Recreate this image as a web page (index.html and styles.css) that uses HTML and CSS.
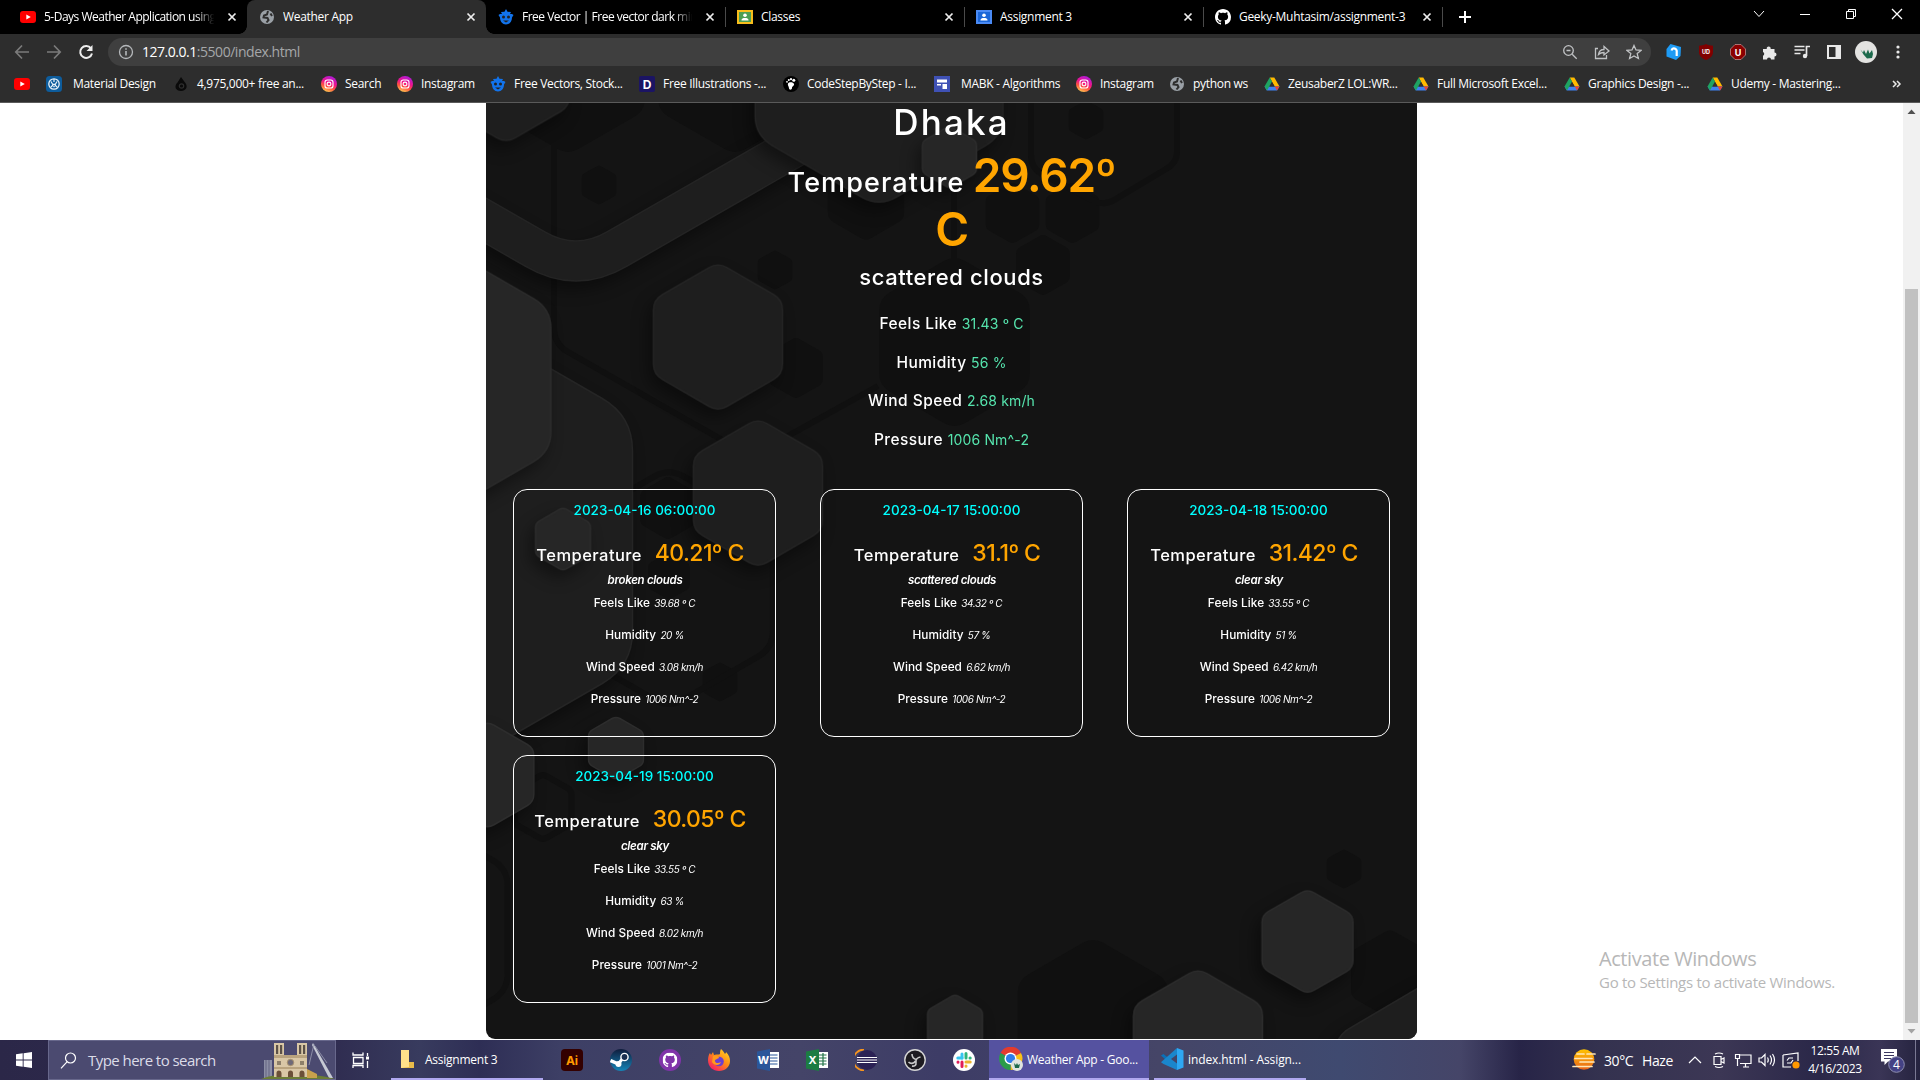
FILE: index.html
```html
<!DOCTYPE html>
<html lang="en">
<head>
<meta charset="utf-8">
<title>Weather App</title>
<link rel="stylesheet" href="styles.css">
</head>
<body>
<svg class="sprite" width="0" height="0" aria-hidden="true">
  <symbol id="yt" viewBox="0 0 16 16"><rect y="2" width="16" height="12" rx="3" fill="#f00"/><path d="M6.3 5.4v5.2L10.8 8z" fill="#fff"/></symbol>
  <symbol id="globe" viewBox="0 0 16 16"><circle cx="8" cy="8" r="7" fill="#9aa0a6"/><path d="M9 2 8 5.500 5 6.500 4.500 8.500 8.500 9 9.500 11 7.500 13.500M11.500 4.500 13 7" fill="none" stroke="#2e2e2e" stroke-width="2"/></symbol>
  <symbol id="freepik" viewBox="0 0 16 16"><path d="M8 0 9.500 2.800 13 3 12 5H14l1.500 1L14 8.500C14 12.500 11.500 15.500 8 15.500S2 12.500 2 8.500L.5 6 2 5H4L3 3 6.500 2.800z" fill="#1273eb"/><circle cx="5.500" cy="8" r="1.500" fill="#222"/><circle cx="10.500" cy="8" r="1.500" fill="#222"/><path d="M5 11.500h6L8 13.500z" fill="#222"/></symbol>
  <symbol id="person" viewBox="0 0 16 16"><circle cx="8" cy="6.200" r="1.800" fill="#fff"/><path d="M4.500 11.500V11C4.500 9.500 6 8.900 8 8.900s3.500.6 3.500 2.100v.500z" fill="#fff"/></symbol>
  <symbol id="github" viewBox="0 0 16 16"><path fill="currentColor" d="M8 0C3.580 0 0 3.580 0 8c0 3.540 2.290 6.530 5.470 7.590.4.070.550-.170.550-.380 0-.190-.010-.820-.010-1.490-2.010.370-2.530-.490-2.690-.940-.090-.230-.480-.940-.820-1.130-.280-.150-.680-.520-.010-.530.630-.010 1.080.580 1.230.820.720 1.210 1.870.870 2.330.660.070-.520.280-.870.510-1.070-1.780-.2-3.640-.890-3.640-3.950 0-.870.310-1.590.820-2.150-.080-.2-.360-1.020.080-2.120 0 0 .670-.210 2.200.820.640-.180 1.320-.270 2-.270s1.360.090 2 .270c1.530-1.040 2.200-.820 2.200-.820.440 1.100.160 1.920.080 2.120.510.560.820 1.270.820 2.150 0 3.070-1.870 3.750-3.650 3.950.290.250.540.730.540 1.480 0 1.070-.010 1.930-.010 2.200 0 .210.150.460.550.380A8.010 8.010 0 0 0 16 8c0-4.420-3.580-8-8-8z"/></symbol>
  <symbol id="close" viewBox="0 0 16 16"><path d="m4.500 4.500 7 7m0-7-7 7" stroke="#eee" stroke-width="1.700"/></symbol>
  <linearGradient id="igg" x1="0.200" y1="1" x2="0.600" y2="0"><stop offset="0" stop-color="#fd5"/><stop offset=".35" stop-color="#ff543e"/><stop offset=".6" stop-color="#f0148c"/><stop offset="1" stop-color="#b01ad8"/></linearGradient>
  <symbol id="ig" viewBox="0 0 16 16"><circle cx="8" cy="8" r="8" fill="url(#igg)"/><rect x="4" y="4" width="8" height="8" rx="2.300" fill="none" stroke="#fff" stroke-width="1.100"/><circle cx="8" cy="8" r="1.900" fill="none" stroke="#fff" stroke-width="1.100"/></symbol>
  <symbol id="drive" viewBox="0 0 16 16"><path d="M5.700 1.500h4.600l5.200 9h-4.800z" fill="#ffba00"/><path d="M3 10.500h12.500L13 14.500H2.800L.5 10.500z" fill="#3e82f1"/><path d="M10.700 10.500h4.800L13 14.500z" fill="#ea4335"/><path d="M8 6 10.600 10.500H5.400z" fill="#2e2e2e"/><path d="M5.700 1.500 8 5.500 3 14.500.5 10.500z" fill="#1ea362"/></symbol>
  <path id="hex" d="M-12.100-93Q0-100 12.100-93L74.500-57Q86.600-50 86.600-36V36Q86.600 50 74.500 57L12.100 93Q0 100-12.100 93L-74.500 57Q-86.600 50-86.600 36V-36Q-86.600-50-74.500-57Z" vector-effect="non-scaling-stroke"/>
</svg>

<header class="browser">
  <div class="tabstrip">
    <div class="tab"><svg class="i16"><use href="#yt"/></svg><span class="title fade">5-Days Weather Application using</span><svg class="i16"><use href="#close"/></svg></div>
    <div class="tab active"><svg class="i16"><use href="#globe"/></svg><span class="title">Weather App</span><svg class="i16"><use href="#close"/></svg></div>
    <div class="tab sep"><svg class="i16"><use href="#freepik"/></svg><span class="title fade">Free Vector | Free vector dark mini</span><svg class="i16"><use href="#close"/></svg></div>
    <div class="tab sep"><svg class="i16"><rect y="1" width="16" height="14" fill="#f8bd1c"/><rect x="2" y="3" width="12" height="10" fill="#4c9e52"/><use href="#person"/></svg><span class="title">Classes</span><svg class="i16"><use href="#close"/></svg></div>
    <div class="tab sep"><svg class="i16"><rect y="1" width="16" height="14" fill="#4a8af4"/><rect x="2" y="3" width="12" height="10" fill="#1a66d8"/><use href="#person"/></svg><span class="title">Assignment 3</span><svg class="i16"><use href="#close"/></svg></div>
    <div class="tab sep"><svg class="i16 white"><use href="#github"/></svg><span class="title">Geeky-Muhtasim/assignment-3</span><svg class="i16"><use href="#close"/></svg></div>
    <svg class="plus" width="46" height="34" viewBox="0 0 46 34"><path d="M23 11v12M17 17h12" stroke="#fff" stroke-width="2"/></svg>
    <div class="winctl">
      <svg viewBox="0 0 46 28"><path d="m18 11 5 5.500 5-5.500" /></svg>
      <svg viewBox="0 0 46 28"><path d="M18 14.500h10"/></svg>
      <svg viewBox="0 0 46 28"><path d="M18.500 11.500h7v7h-7zM20.500 11.500v-2h7v7h-2"/></svg>
      <svg viewBox="0 0 46 28"><path d="m18 9 10 10m0-10L18 19" stroke-width="1.300"/></svg>
    </div>
  </div>

  <div class="toolbar">
    <div class="nav">
      <svg class="i16" stroke="#7b7b7b" stroke-width="1.700" fill="none"><path d="M15 8H2m6-6.500L1.800 8 8 14.500"/></svg>
      <svg class="i16" stroke="#7b7b7b" stroke-width="1.700" fill="none"><path d="M1 8h13M8 1.500 14.200 8 8 14.500"/></svg>
      <svg class="i16" stroke="#eee" stroke-width="2" fill="none"><path d="M13 4.300A6 6 0 1 0 14 9.500"/><path d="M14.500 1v6h-6z" fill="#eee" stroke="none"/></svg>
    </div>
    <div class="omnibox">
      <svg class="i16" stroke="#b5b8bb" stroke-width="1.300" fill="none"><circle cx="8" cy="8" r="6.500"/><path d="M8 7v4.500M8 4.300v1.500" stroke-width="1.600"/></svg>
      <span class="url"><b>127.0.0.1</b>:5500/index.html</span>
      <div class="omni-icons" >
        <svg class="i16"><circle cx="6.500" cy="6.500" r="4.800"/><path d="m10.200 10.200 4.500 4.500M4.500 6.500h4"/></svg>
        <svg class="i16"><path d="M4 4.500H1.500v10h11V11M4.500 10.500C5 7 7.500 5.500 10 5.500V2.500L15 7l-5 4V8.500C7.500 8.500 6 9 4.500 10.500z"/></svg>
        <svg class="i16"><path d="m8 1.500 2 4.500 5 .4-3.800 3.200 1.200 4.900L8 11.900l-4.400 2.600 1.200-4.900L1 6.400l5-.4z"/></svg>
      </div>
    </div>
    <div class="extensions">
      <svg class="i16"><path d="M4.500 0 15 3l-.5 9L10 16 .5 12.500V5z" fill="#1e9bf5"/><path d="M5.500 6.500A2.700 2.700 0 0 1 10.700 8v4" fill="none" stroke="#fff" stroke-width="2.200"/></svg>
      <svg class="i16"><path d="M8 0C10 1.200 12.500 1.700 15 1.700V8c0 4-3 6.500-7 8-4-1.500-7-4-7-8V1.700C3.500 1.700 6 1.200 8 0z" fill="#800000"/><text x="8" y="10" class="ico-text ud">UD</text></svg>
      <svg class="i16"><path d="M5 .5h6L15.500 5v6L11 15.500H5L.5 11V5z" fill="#8b0000" stroke="#c99" stroke-width=".7"/><text x="8" y="11.500" class="ico-text">U</text></svg>
      <svg class="i16"><path d="M1 5h3.800a2 2 0 1 1 3.800 0H12.500v3.500a2 2 0 1 1 0 4V15.500H9a2 2 0 0 0-4 0H1v-3.800a2 2 0 0 0 0-3.700z" fill="#e8e8e8"/></svg>
      <svg class="i16"><path d="M.5 2.500h10M.5 6h10M.5 9.500h6" stroke="#e8e8e8" stroke-width="1.700"/><path d="M12.500 12V2.500H16" fill="none" stroke="#e8e8e8" stroke-width="1.700"/><circle cx="11" cy="12" r="2.200" fill="#e8e8e8"/></svg>
      <svg class="i16"><path d="M2 2h12v12H2z" fill="none" stroke="#e8e8e8" stroke-width="2"/><path d="M9.500 2H14v12H9.500z" fill="#e8e8e8"/></svg>
      <svg class="avatar" viewBox="0 0 22 22"><circle cx="11" cy="11" r="11" fill="#e3e3e1"/><path d="M5.500 8.500 8 11.500 9 9l2 4 2-4.500 1.500 4L17 9l1 4-1 4-5 .5-3.500-4z" fill="#1c6a4c"/></svg>
      <svg class="i16"><g fill="#e8e8e8"><circle cx="8" cy="3" r="1.600"/><circle cx="8" cy="8" r="1.600"/><circle cx="8" cy="13" r="1.600"/></g></svg>
    </div>
  </div>

  <nav class="bookmarks">
    <a><svg class="i16"><use href="#yt"/></svg></a>
    <a><svg class="i16"><rect width="16" height="16" rx="3.500" fill="#0d5c9c"/><circle cx="8" cy="8" r="5.200" fill="none" stroke="#e8f1f8" stroke-width="1.300"/><path d="m5 5.500 3 5 3-5M8 3v3M5 11l3-3 3 3" fill="none" stroke="#e8f1f8" stroke-width="1.200"/></svg><span class="wide">Material Design</span></a>
    <a><svg class="i16"><path d="M8 1 12 6.500C15 10 14 14.500 8 15 2 14.500 1 10 4.500 6.500z" fill="#0a0a0a"/><circle cx="8.500" cy="10" r="2.200" fill="none" stroke="#2e2e2e" stroke-width="1.200"/></svg><span>4,975,000+ free an...</span></a>
    <a><svg class="i16"><use href="#ig"/></svg><span>Search</span></a>
    <a><svg class="i16"><use href="#ig"/></svg><span>Instagram</span></a>
    <a><svg class="i16"><use href="#freepik"/></svg><span>Free Vectors, Stock...</span></a>
    <a><svg class="i16"><rect width="16" height="16" rx="2" fill="#1b1464"/><text x="8" y="12.500" class="ico-text d">D</text></svg><span>Free Illustrations -...</span></a>
    <a><svg class="i16"><circle cx="8" cy="8" r="8" fill="#000"/><path d="M5 7.500C6 5.500 10.500 6 11 8s-2 2-2 4-2.800 2.500-3 .3S4.300 9 5 7.500z" fill="#fff"/><g fill="#fff"><circle cx="4" cy="5.800" r=".9"/><circle cx="5.800" cy="4" r="1"/><circle cx="8" cy="3.200" r="1.100"/><circle cx="10.800" cy="4.300" r="1.500"/></g></svg><span>CodeStepByStep - I...</span></a>
    <a><svg class="i16"><rect width="16" height="16" fill="#3f51b5"/><path d="M3 3.500h10v3H3zM3 8h4v1.500H3zM8.500 8H13v5H8.500z" fill="#fff"/></svg><span class="wide">MABK - Algorithms</span></a>
    <a><svg class="i16"><use href="#ig"/></svg><span>Instagram</span></a>
    <a><svg class="i16"><use href="#globe"/></svg><span>python ws</span></a>
    <a><svg class="i16"><use href="#drive"/></svg><span>ZeusaberZ LOL:WR...</span></a>
    <a><svg class="i16"><use href="#drive"/></svg><span>Full Microsoft Excel...</span></a>
    <a><svg class="i16"><use href="#drive"/></svg><span>Graphics Design -...</span></a>
    <a><svg class="i16"><use href="#drive"/></svg><span>Udemy - Mastering...</span></a>
    <svg class="i16 more"><path d="m4 5 3 3-3 3m4-6 3 3-3 3" fill="none" stroke="#e8e8e8" stroke-width="1.500"/></svg>
  </nav>
</header>

<div class="viewport">
  <main class="weather">
    <svg class="pattern" viewBox="486 103 931 936" preserveAspectRatio="none">
      <g class="dark">
        <use href="#hex" transform="translate(568 66) scale(.89)"/>
        <use href="#hex" transform="translate(735 66) scale(.89)"/>
        <use href="#hex" transform="translate(599 185) scale(.2)"/>
        <use href="#hex" transform="translate(775 270) scale(.2)"/>
        <use href="#hex" transform="translate(796 368) scale(.31)"/>
        <use href="#hex" transform="translate(866 197) scale(.44)"/>
        <use href="#hex" transform="translate(954.500 342) scale(.87)"/>
        <use href="#hex" transform="translate(1012.500 213) scale(.31)"/>
        <use href="#hex" transform="translate(1072.500 213) scale(.31)"/>
        <use href="#hex" transform="translate(1043 265) scale(.31)"/>
        <use href="#hex" transform="translate(1086 120) scale(.2)"/>
        <use href="#hex" transform="translate(668 508) scale(.32)"/>
        <use href="#hex" transform="translate(669 576) scale(.24)"/>
        <use href="#hex" transform="translate(720 682) scale(.2)"/>
        <use href="#hex" transform="translate(1093 1024) scale(.87)"/>
        <use href="#hex" transform="translate(1344 869) scale(.2)"/>
        <use href="#hex" transform="translate(1390 974) scale(.45)"/>
      </g>
      <g class="outline">
        <path d="M554 100V328Q554 344 568 352L740 450Q755 458 770 446L878 386M954 180V260"/>
        <path d="M1031 100V155Q1031 168 1042 174L1092 200Q1104 207 1116 199L1166 169Q1177 163 1177 152V100"/>
        <use href="#hex" transform="translate(669 588) scale(1.200)"/>
        <use href="#hex" transform="translate(543 807) scale(.33)"/>
        <use href="#hex" transform="translate(402 930) scale(1.220)"/>
      </g>
      <g class="raised">
        <path class="band-edge" d="M460 206 535 249Q576 273 617 249L880 98"/>
        <path class="band" d="M460 206 535 249Q576 273 617 249L880 98"/>
      </g>
      <g class="raised mid">
        <use href="#hex" transform="translate(506 70) scale(.73)"/>
        <use href="#hex" transform="translate(879 64) scale(1.430)"/>
        <use href="#hex" transform="translate(718 337) scale(.745)"/>
        <use href="#hex" transform="translate(758 493) scale(.745)"/>
        <use href="#hex" transform="translate(416 541) scale(2.500)"/>
        <path d="M1336 1045Q1340 1033 1352 1027L1430 981V1050Z"/>
      </g>
      <g class="raised light">
        <use href="#hex" transform="translate(949.500 157) scale(.312)"/>
        <use href="#hex" transform="translate(427 380) scale(1.430)"/>
        <use href="#hex" transform="translate(563 539) scale(.317)"/>
        <use href="#hex" transform="translate(616 748) scale(.317)"/>
        <use href="#hex" transform="translate(487.500 775) scale(.535)"/>
        <use href="#hex" transform="translate(1307.500 941.500) scale(.525)"/>
        <use href="#hex" transform="translate(1198 1043) scale(.745)"/>
        <use href="#hex" transform="translate(955 1026) scale(.317)"/>
      </g>
    </svg>

    <section class="current">
      <h1>Dhaka</h1>
      <p class="temp">Temperature <strong>29.62º<br>C</strong></p>
      <p class="sky">scattered clouds</p>
      <ul class="facts">
        <li>Feels Like <span>31.43 º C</span></li>
        <li>Humidity <span>56 %</span></li>
        <li>Wind Speed <span>2.68 km/h</span></li>
        <li>Pressure <span>1006 Nm^-2</span></li>
      </ul>
    </section>

    <section class="forecast">
      <article>
        <h2>2023-04-16 06:00:00</h2>
        <p class="temp">Temperature <strong>40.21º C</strong></p>
        <p class="sky">broken clouds</p>
        <ul><li>Feels Like <em>39.68 º C</em></li><li>Humidity <em>20 %</em></li><li>Wind Speed <em>3.08 km/h</em></li><li>Pressure <em>1006 Nm^-2</em></li></ul>
      </article>
      <article>
        <h2>2023-04-17 15:00:00</h2>
        <p class="temp">Temperature <strong>31.1º C</strong></p>
        <p class="sky">scattered clouds</p>
        <ul><li>Feels Like <em>34.32 º C</em></li><li>Humidity <em>57 %</em></li><li>Wind Speed <em>6.62 km/h</em></li><li>Pressure <em>1006 Nm^-2</em></li></ul>
      </article>
      <article>
        <h2>2023-04-18 15:00:00</h2>
        <p class="temp">Temperature <strong>31.42º C</strong></p>
        <p class="sky">clear sky</p>
        <ul><li>Feels Like <em>33.55 º C</em></li><li>Humidity <em>51 %</em></li><li>Wind Speed <em>6.42 km/h</em></li><li>Pressure <em>1006 Nm^-2</em></li></ul>
      </article>
      <article>
        <h2>2023-04-19 15:00:00</h2>
        <p class="temp">Temperature <strong>30.05º C</strong></p>
        <p class="sky">clear sky</p>
        <ul><li>Feels Like <em>33.55 º C</em></li><li>Humidity <em>63 %</em></li><li>Wind Speed <em>8.02 km/h</em></li><li>Pressure <em>1001 Nm^-2</em></li></ul>
      </article>
    </section>
  </main>

  <aside class="watermark"><p class="big">Activate Windows</p><p>Go to Settings to activate Windows.</p></aside>

  <div class="scrollbar">
    <svg width="17" height="17"><path d="M4.500 11h8l-4-4.500z" fill="#505050"/></svg>
    <div class="track"><div class="thumb"></div></div>
    <svg width="17" height="17"><path d="M4.500 6h8l-4 4.500z" fill="#a3a3a3"/></svg>
  </div>
</div>

<footer class="taskbar">
  <div class="start"><svg width="16" height="16"><path d="M0 2.300 6.700 1.300V7.600H0zM7.600 1.200 16 0v7.600H7.600zM0 8.500h6.700v6.300L0 13.800zM7.600 8.500H16V16l-8.400-1.200z" fill="#fff"/></svg></div>
  <div class="search">
    <svg width="17" height="17" fill="none" stroke="#fff" stroke-width="1.200"><circle cx="10.500" cy="6" r="5"/><path d="m7 9.800-6 6.500"/></svg>
    <span>Type here to search</span>
    <svg class="cathedral" width="74" height="38" viewBox="0 0 74 38">
      <path d="M3 19h8v18H3z" fill="#8c8ea5"/><path d="M5 19v18M8 19v18" stroke="#5a5c78" stroke-width=".8"/>
      <path d="M52 2 72 37h-4L51 4z" fill="#c6c9d4"/><path d="M53 3 48 24M54 5l12 17" stroke="#9a9db3" stroke-width=".8"/>
      <path d="M0 38Q12 33 34 33T74 38z" fill="#6b7d35"/>
      <path d="M13 2h10v12h13V2h10v34H13z" fill="#d9c7a6"/>
      <path d="M15 4h2.200v9H15zM19 4h2.200v9H19zM38 4h2.200v9H38zM42 4h2.200v9H42z" fill="#5c5148"/>
      <path d="M13 14h33v3H13zM13 26h33v2H13z" fill="#b9a37e"/><circle cx="29.500" cy="21.500" r="3.200" fill="#6f6a78" stroke="#a8926f"/>
      <path d="M16 24v-4h4v4zM39 24v-4h4v4z" fill="#8d7f6a"/>
      <path d="M15.500 36v-4a2.500 2.500 0 0 1 5 0v4zM27 36v-4a2.500 2.500 0 0 1 5 0v4zM38.500 36v-4a2.500 2.500 0 0 1 5 0v4z" fill="#6b5038"/>
      <path d="M46 28 56 33v4H46z" fill="#c9a14c"/>
    </svg>
  </div>
  <div class="cell view"><svg width="18" height="18" fill="none" stroke="#fff" stroke-width="1.300"><path d="M1 1.500V4h10V1.500M1.500 6.500h9.500v6H1.500zM1 17v-2.500h10V17M15.500 2v3M15.500 10v7"/><path d="M14 5.500h3v3h-3z" fill="#fff" stroke="none"/></svg></div>
  <div class="task folder open"><svg width="16" height="20"><path d="M1 1h8v12h5v6H1z" fill="#e8bb4a"/><path d="M1 1h8v17L1 19z" fill="#ffe08a"/></svg><span>Assignment 3</span></div>
  <div class="pins">
    <svg viewBox="0 0 22 22"><rect width="22" height="22" rx="4" fill="#330000"/><text x="11" y="15.500" class="ico-text ai">Ai</text></svg>
    <svg viewBox="0 0 22 22"><linearGradient id="st" x2="0" y2="1"><stop stop-color="#101c3c"/><stop offset="1" stop-color="#1585b8"/></linearGradient><circle cx="11" cy="11" r="11" fill="url(#st)"/><path d="M.5 11.500 8.500 15" stroke="#fff" stroke-width="3.500"/><circle cx="8.500" cy="15" r="3" fill="#fff"/><path d="m9 14 5-6" stroke="#fff" stroke-width="3"/><circle cx="14.500" cy="8" r="3.600" fill="#1a3050" stroke="#fff" stroke-width="1.400"/></svg>
    <svg viewBox="0 0 22 22"><circle cx="11" cy="11" r="11" fill="#8034a9"/><svg x="3.500" y="3.500" width="15" height="15" color="#fff"><use href="#github"/></svg></svg>
    <svg viewBox="0 0 22 22"><linearGradient id="ff" x1="1" x2="0.200" y2="1"><stop stop-color="#ffe226"/><stop offset=".5" stop-color="#ff8a16"/><stop offset="1" stop-color="#f5156c"/></linearGradient><path d="M13 0c2 2 3 3 4 5 1-1 1-2 1-2 3 3 4 6 4 9 0 6-5 10-11 10S0 18 0 11c0-3 1-6 2-7l1 2 2-3 1 3c3-1 5 0 6-1 0-2 0-3 1-5z" fill="url(#ff)"/><circle cx="11" cy="12.500" r="4.800" fill="#6a3fd0"/><path d="M5 7c3-1 6 0 6 2-1 1-4 1-4 3s3 3 6 1c-1 4-7 4-9 0z" fill="#ff9a1c"/></svg>
    <svg viewBox="0 0 22 22"><path d="M11 3h11v16H11z" fill="#fff"/><path d="M13 6h7.500M13 9h7.500M13 12h7.500M13 15h7.500" stroke="#2b579a" stroke-width="1.200"/><path d="M0 2.500 13 0v22L0 19.500z" fill="#2b579a"/><text x="6.500" y="15" class="ico-text w">W</text></svg>
    <svg viewBox="0 0 22 22"><path d="M11 3h11v16H11z" fill="#fff"/><path d="M13 6h7.500M13 9h7.500M13 12h7.500M13 15h7.500M17 4v13" stroke="#217346" stroke-width="1.200"/><path d="M0 2.500 13 0v22L0 19.500z" fill="#1c7c43"/><text x="6.500" y="15.200" class="ico-text w">X</text></svg>
    <svg viewBox="0 0 22 22"><path d="M9 .5a10.500 10.500 0 0 0 0 21" fill="none" stroke="#f7941e" stroke-width="1.800"/><circle cx="12" cy="11" r="10" fill="#2c2255"/><path d="M2 8.500h20M2 11h20M2 13.500h20" stroke="#fff" stroke-width="1.100"/></svg>
    <svg viewBox="0 0 22 22"><circle cx="11" cy="11" r="10.200" fill="#1d1b20" stroke="#d5d5d5" stroke-width="1.400"/><path d="M8 5c0 4 2 5 4.500 5.500M16.500 8c-3 .5-5 2.500-4.500 5.500s-2 4-4 3.500M4.500 13c2 2 5 2 7-1" fill="none" stroke="#c9c9c9" stroke-width="1.600"/></svg>
    <svg viewBox="0 0 22 22"><circle cx="11" cy="11" r="11" fill="#fff"/><g stroke-width="3" stroke-linecap="round"><path d="M9 5v4" stroke="#36c5f0"/><path d="M4.800 9H9" stroke="#36c5f0"/><path d="M13 4.500V9M17 9h.2" stroke="#2eb67d"/><path d="M13 13h4.200M13 17v.2" stroke="#ecb22e"/><path d="M9 13v4.500M5 13v.2" stroke="#e01e5a"/></g></svg>
  </div>
  <div class="task chrome open active"><svg width="24" height="24" viewBox="0 0 24 24"><path d="M11.500 11.500 1.500 6A11.500 11.500 0 0 1 22 6z" fill="#e33b2e"/><path d="M11.500 11.500 22 6a11.500 11.500 0 0 1-10.500 17z" fill="#fbc116"/><path d="M11.500 11.500 11.500 23A11.500 11.500 0 0 1 1.500 6z" fill="#2a9c4a"/><circle cx="11.500" cy="11.500" r="6" fill="#fff"/><circle cx="11.500" cy="11.500" r="4.600" fill="#2f7de9"/><circle cx="18" cy="18" r="6" fill="#dfe4df"/><path d="m15 16 2 2 1-2 1 2 2-1-1 4h-4z" fill="#1c6a4c"/></svg><span>Weather App - Goo...</span></div>
  <div class="task code open"><svg width="24" height="24" viewBox="0 0 24 24"><path d="M17 1v22L1 8.500 3.500 7 17 18z" fill="#0a70b8"/><path d="M17 1v22L3.500 17 1 15.200z" fill="#1a86cc"/><path d="m17 1 6.500 2.500v17L17 23z" fill="#2ea7f2"/><path d="M17 7.500v9L11 12z" fill="#414468"/></svg><span>index.html - Assign...</span></div>

  <div class="tray">
    <svg class="sun" width="24" height="22" viewBox="0 0 24 22"><linearGradient id="sg" x2="0" y2="1"><stop stop-color="#ffc400"/><stop offset="1" stop-color="#e8621a"/></linearGradient><circle cx="12" cy="10.500" r="10.300" fill="url(#sg)"/><path d="M5 5h7M15 5h8M3 9.500h17M8 13h14M1 17.500h19" stroke="#ffe7b8" stroke-width="1.700" stroke-linecap="round"/></svg>
    <span class="deg">30°C</span><span class="haze">Haze</span>
    <svg class="t" viewBox="0 0 18 18"><path d="m3 12 6-6 6 6"/></svg>
    <svg class="t" viewBox="0 0 18 18"><path d="M5 3Q9 1 13 3M5 15.500q4 2 8 0M4 5.500h7v8H4zM11 8.500l3-1.500v5l-3-1.500"/></svg>
    <svg class="t" viewBox="0 0 18 18"><path d="M6 4h11v8.500H6M9 16h6M11.500 12.500V16M1.500 3.500h4v4h-4zM3.500 7.500V15"/></svg>
    <svg class="t" viewBox="0 0 18 18"><path d="M1 7h2.500L7 3.500v11L3.500 11H1zM9.500 6.500q1.500 2.500 0 5M12 4.500q3 4.500 0 9M14.500 3q4 6 0 12"/></svg>
    <svg class="t" viewBox="0 0 18 18"><path d="M1 4 16 2v8M1 4v12h8M5 9.500l2-2.500 4 0M11 9l-2 3H5"/><circle cx="14" cy="14" r="3.600" fill="#ff9800" stroke="none"/></svg>
    <div class="clock"><span>12:55 AM</span><span>4/16/2023</span></div>
    <svg class="notif" width="28" height="30" viewBox="0 0 28 30"><path d="M2 4h16v12.500H9L5.500 20v-3.500H2z" fill="#fff"/><path d="M5 7.500h10M5 10.500h10M5 13.500h7" stroke="#3a3660" stroke-width="1"/><circle cx="17.500" cy="19.500" r="7.800" fill="#444285" stroke="#8e8eb0"/><text x="17.500" y="24" class="ico-text n">4</text></svg>
    <i class="peek"></i>
  </div>
</footer>
</body>
</html>
```
FILE: styles.css
```css
* { box-sizing: border-box; margin: 0; padding: 0; }
body { width: 1920px; height: 1080px; overflow: hidden; display: flex; flex-direction: column; background: #fff; font-family: "Open Sans", "Noto Sans", sans-serif; font-size: 12px; }
.sprite { position: absolute; }
svg { display: block; flex: none; }
.i16 { width: 16px; height: 16px; }
.white { color: #fff; }
ul { list-style: none; }
.ico-text { font: 700 9px Inter, sans-serif; fill: #fff; text-anchor: middle; letter-spacing: 0; }
.ico-text.ud { font-size: 5.5px; }
.ico-text.d { font-size: 12px; }
.ico-text.ai { font-size: 12px; fill: #ff9a00; }
.ico-text.w { font-size: 11px; }
.ico-text.n { font: 400 12px "Open Sans", sans-serif; }

/* browser chrome */
.browser { height: 103px; background: #2d2d2d; border-bottom: 1px solid #5a5a5a; color: #fff; letter-spacing: -.3px; }
.tabstrip { height: 34px; background: #000; display: flex; padding-left: 8px; }
.tab { width: 239px; height: 34px; display: flex; align-items: center; padding: 0 7px 0 12px; gap: 8px; position: relative; }
.tab .title { flex: 1; white-space: nowrap; overflow: hidden; padding-bottom: 1px; }
.tab .title.fade { letter-spacing: -.5px; margin-right: -3px; -webkit-mask-image: linear-gradient(90deg, #000 88%, transparent 99%); mask-image: linear-gradient(90deg, #000 88%, transparent 99%); }
.tab .title.fade + svg { margin-left: 3px; }
.tab.active { background: #2d2d2d; border-radius: 8px 8px 0 0; }
.tab.active::before, .tab.active::after { content: ""; position: absolute; bottom: 0; width: 8px; height: 8px; }
.tab.active::before { left: -8px; background: radial-gradient(circle at 0 0, transparent 7.5px, #2d2d2d 8px); }
.tab.active::after { right: -8px; background: radial-gradient(circle at 100% 0, transparent 7.5px, #2d2d2d 8px); }
.tab.sep::after { content: ""; position: absolute; right: -1px; top: 7px; width: 1px; height: 20px; background: #4a4a4a; }
.winctl { margin-left: auto; display: flex; }
.winctl svg { width: 46px; height: 28px; fill: none; stroke: #fff; stroke-width: 1; }
.toolbar { height: 36px; display: flex; align-items: center; }
.nav { width: 108px; padding-left: 14px; display: flex; gap: 16px; }
.omnibox { width: 1543px; height: 28px; border-radius: 14px; background: #3f3f3f; display: flex; align-items: center; padding: 0 9px 0 10px; }
.url { margin-left: 8px; padding-bottom: 1px; font-size: 14px; letter-spacing: -.47px; color: #a5a7a9; }
.url b { font-weight: 400; color: #fff; }
.omni-icons { margin-left: auto; display: flex; gap: 16px; fill: none; stroke: #c0c2c4; stroke-width: 1.3; }
.extensions { flex: 1; display: flex; align-items: center; gap: 16px; padding-left: 15px; }
.avatar { width: 22px; height: 22px; margin: 0 -3px; }
.bookmarks { height: 28px; padding-left: 14px; display: grid; align-items: center; grid-template-columns: 32px 127px 148px 76px 93px 149px 144px 151px 142px 93px 95px 149px 151px 143px 182px 16px; }
.bookmarks a { display: flex; align-items: center; gap: 8px; white-space: nowrap; }
.bookmarks span { padding-bottom: 1px; }
.bookmarks .wide { padding-left: 3px; }

/* page */
.viewport { height: 937px; position: relative; display: flex; justify-content: space-between; background: #fff; padding-left: 486px; }
.weather { width: 931px; height: 936px; background: #141414; border-radius: 0 0 9px 9px; position: relative; color: #fff; font-family: Inter, sans-serif; isolation: isolate; }
.pattern { position: absolute; inset: 0; width: 100%; height: 100%; z-index: -1; border-radius: 0 0 9px 9px; overflow: hidden; }
.dark { fill: #101010; }
.outline { fill: none; stroke: #101010; stroke-width: 6; }
.raised { filter: drop-shadow(-5px 8px 8px rgba(0, 0, 0, .4)); }
.mid { fill: #1e1e1e; stroke: #252525; stroke-width: 1.5; }
.light { fill: #262626; stroke: #2d2d2d; stroke-width: 1.5; }
.band, .band-edge { fill: none; stroke: #1e1e1e; stroke-width: 38; }
.band-edge { stroke: #242424; stroke-width: 41; }

.current { height: 386px; text-align: center; font-weight: 500; }
.current h1 { font-size: 35px; line-height: 38px; font-weight: 500; letter-spacing: 2.2px; }
.current .temp { margin-top: 7px; font-size: 27px; line-height: 38px; letter-spacing: 1.1px; }
.current .temp strong { font-size: 46px; line-height: 54px; font-weight: 600; color: orange; letter-spacing: -1.2px; }
.current .sky { margin-top: 6px; font-size: 22px; line-height: 30px; letter-spacing: .6px; }
.facts { margin-top: 13px; font-size: 15.5px; line-height: 38.7px; letter-spacing: .45px; }
.facts li { height: 38.7px; }
.facts span { font-size: 14px; font-weight: 400; color: #56e5ae; letter-spacing: .15px; }

.forecast { display: grid; grid-template-columns: repeat(3, 263px); gap: 18px 44px; padding-left: 27px; text-align: center; font-weight: 500; }
.forecast article { height: 248px; border: 1px solid #fff; border-radius: 14px; padding-top: 10px; }
.forecast h2 { font-size: 13.5px; line-height: 20px; font-weight: 500; color: cyan; }
.forecast .temp { margin-top: 18px; font-size: 16.5px; line-height: 24px; height: 30px; white-space: nowrap; letter-spacing: .45px; }
.forecast .temp strong { font-size: 23px; line-height: 30px; font-weight: 500; color: orange; margin: 0 9px 0 8px; letter-spacing: -.6px; }
.forecast .sky { margin-top: 3px; font-size: 11.5px; line-height: 18px; font-style: italic; font-weight: 600; letter-spacing: -.3px; padding-left: 1px; }
.forecast ul { font-size: 11.8px; line-height: 28px; display: grid; gap: 4px; letter-spacing: .05px; }
.forecast li { height: 28px; }
.forecast em { font-size: 10px; font-weight: 400; letter-spacing: -.4px; margin-left: 1px; }

.watermark { position: absolute; left: 1599px; top: 842px; color: #b7b7b7; white-space: nowrap; }
.watermark p { font-size: 15px; line-height: 18px; letter-spacing: -.28px; }
.watermark .big { font-size: 20px; line-height: 28px; letter-spacing: -.43px; }
.scrollbar { width: 17px; height: 937px; background: #f1f1f1; display: flex; flex-direction: column; }
.track { flex: 1; padding: 169px 2px 0; }
.thumb { height: 734px; background: #c1c1c1; }

/* taskbar */
.taskbar { height: 40px; display: flex; color: #fff; letter-spacing: -.25px; background: linear-gradient(90deg, #2b2748 0, #2f2c50 330px, #383b5e 420px, #2e2e55 480px, #3d3f65 560px, #444468 800px, #3d3c66 940px, #454567 1160px, #3f4a70 1340px, #454568 1460px, #272447 1520px, #34324f 1600px, #3c3755 1720px, #2a2748 1820px, #3a3556 1880px, #25233f 1920px); }
.start { width: 48px; display: grid; place-items: center; }
.search { width: 288px; border: 1px solid #68688c; background: #4b4a70; display: flex; align-items: center; padding-left: 11px; font-size: 15px; color: #dcdce8; letter-spacing: -.55px; }
.search span { margin-left: 11px; white-space: nowrap; flex: 1; }
.view { width: 55px; padding-left: 16px; display: flex; align-items: center; }
.task { display: flex; align-items: center; white-space: nowrap; }
.task.open { border-bottom: 2px solid #b0a8f0; }
.folder { width: 152px; padding-left: 9px; gap: 9px; }
.pins { display: flex; align-items: center; gap: 27px; padding: 0 14px 0 18px; }
.pins svg { width: 22px; height: 22px; }
.pins svg svg { width: 15px; height: 15px; }
.chrome { width: 160px; padding-left: 10px; gap: 4px; background: #5552a0; }
.code { width: 152px; margin-left: 5px; padding-left: 6px; gap: 4px; letter-spacing: -.1px; }
.tray { margin-left: auto; width: 348px; display: flex; align-items: center; font-size: 14px; letter-spacing: -.4px; }
.deg { margin-left: 8px; width: 38px; }
.haze { width: 44px; }
.t { width: 18px; height: 18px; margin-right: 6px; fill: none; stroke: #fff; stroke-width: 1.2; }
.clock { width: 60px; margin-left: -1px; display: flex; flex-direction: column; text-align: center; font-size: 12px; line-height: 18px; letter-spacing: -.38px; }
.notif { margin-left: 14px; }
.peek { width: 1px; height: 40px; background: #7a7893; margin-left: auto; margin-right: 4px; }
```
